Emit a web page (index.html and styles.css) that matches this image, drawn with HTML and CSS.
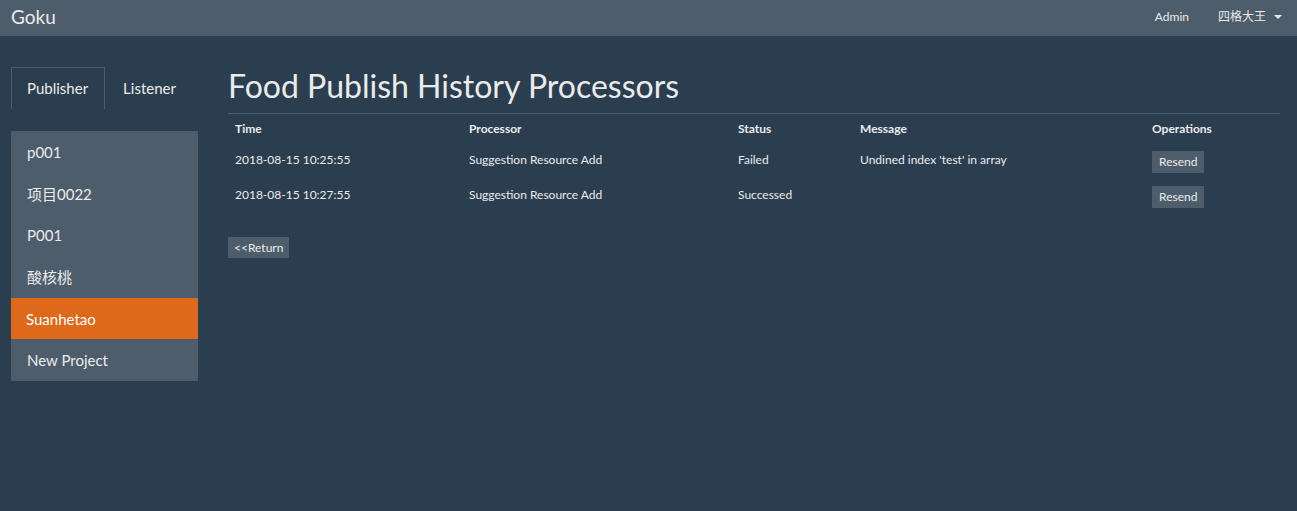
FILE: index.html
```html
<!DOCTYPE html>
<html>
<head>
<meta charset="utf-8">
<link rel="stylesheet" href="styles.css">
</head>
<body>
<nav class="navbar">
  <a class="brand">Goku</a>
  <div class="nav-right">
    <span class="nav-link">Admin</span>
    <span class="nav-link user">四格大王 <span class="caret"></span></span>
  </div>
</nav>
<div class="page">
  <aside class="sidebar">
    <ul class="tabs">
      <li class="tab active">Publisher</li>
      <li class="tab">Listener</li>
    </ul>
    <ul class="list-group">
      <li class="item">p001</li>
      <li class="item">项目0022</li>
      <li class="item">P001</li>
      <li class="item">酸核桃</li>
      <li class="item active">Suanhetao</li>
      <li class="item">New Project</li>
    </ul>
  </aside>
  <main class="main">
    <h1 class="title">Food Publish History Processors</h1>
    <table class="table">
      <thead>
        <tr>
          <th class="c-time">Time</th>
          <th class="c-proc">Processor</th>
          <th class="c-status">Status</th>
          <th class="c-msg">Message</th>
          <th class="c-ops">Operations</th>
        </tr>
      </thead>
      <tbody>
        <tr>
          <td>2018-08-15 10:25:55</td>
          <td>Suggestion Resource Add</td>
          <td>Failed</td>
          <td>Undined index 'test' in array</td>
          <td><button class="btn">Resend</button></td>
        </tr>
        <tr>
          <td>2018-08-15 10:27:55</td>
          <td>Suggestion Resource Add</td>
          <td>Successed</td>
          <td></td>
          <td><button class="btn">Resend</button></td>
        </tr>
      </tbody>
    </table>
    <button class="btn return">&lt;&lt;Return</button>
  </main>
</div>
</body>
</html>
```
FILE: styles.css
```css
* { box-sizing: border-box; }
html, body { margin: 0; padding: 0; }
body {
  background: #2b3e50;
  color: #ebebeb;
  font-family: Lato, "Noto Sans CJK SC", sans-serif;
  font-size: 15px;
  min-height: 511px;
}
ul { list-style: none; margin: 0; padding: 0; }

.navbar {
  height: 36px;
  background: #4e5d6c;
  display: flex;
  align-items: center;
  justify-content: space-between;
  padding: 0 15px 2px 11px;
}
.brand { font-size: 19px; color: #ebebeb; line-height: 22px; }
.nav-right { display: flex; align-items: center; font-size: 12px; line-height: 16px; }
.nav-link { margin-left: 29px; display: flex; align-items: center; }
.caret {
  display: inline-block;
  width: 0; height: 0;
  margin-left: 8px;
  border-top: 4px solid #ebebeb;
  border-left: 4px solid transparent;
  border-right: 4px solid transparent;
}

.page {
  display: flex;
  padding: 31px 17px 0 11px;
}
.sidebar { width: 187px; flex: none; }
.tabs { display: flex; height: 42px; }
.tab {
  padding: 0 15px;
  line-height: 40px;
  margin-right: 2px;
  border: 1px solid transparent;
  border-bottom: none;
}
.tab.active { border-color: #4e5d6c; padding-right: 16px; }
.list-group { margin-top: 22px; }
.item {
  background: #4e5d6c;
  padding: 11px 16px 9px;
  height: 41.67px;
  line-height: 21.67px;
}
.item.active { background: #df691a; color: #fff; padding-left: 15px; }

.main { flex: 1; margin-left: 30px; }
.title {
  font-size: 32px;
  font-weight: 400;
  margin: 0;
  padding: 0 0 8px;
  line-height: 38px;
  border-bottom: 1px solid #4e5d6c;
  color: #ebebeb;
}
.table { width: 100%; border-collapse: collapse; font-size: 12px; }
.table th { text-align: left; font-weight: 700; padding: 6px 7px 8px; line-height: 17px; height: 31px; }
.table td { padding: 6px 7px 7px; vertical-align: top; height: 35px; line-height: 17px; }
.c-time { width: 234px; }
.c-proc { width: 269px; }
.c-status { width: 122px; }
.c-msg { width: 292px; }
.btn {
  font-family: inherit;
  font-size: 12px;
  color: #ebebeb;
  background: #4e5d6c;
  border: none;
  border-radius: 0;
  padding: 0 7px;
  height: 22px;
  line-height: 22px;
  display: block;
}
.return { margin-top: 22px; padding: 0 6px; height: 21px; line-height: 21px; }
```
